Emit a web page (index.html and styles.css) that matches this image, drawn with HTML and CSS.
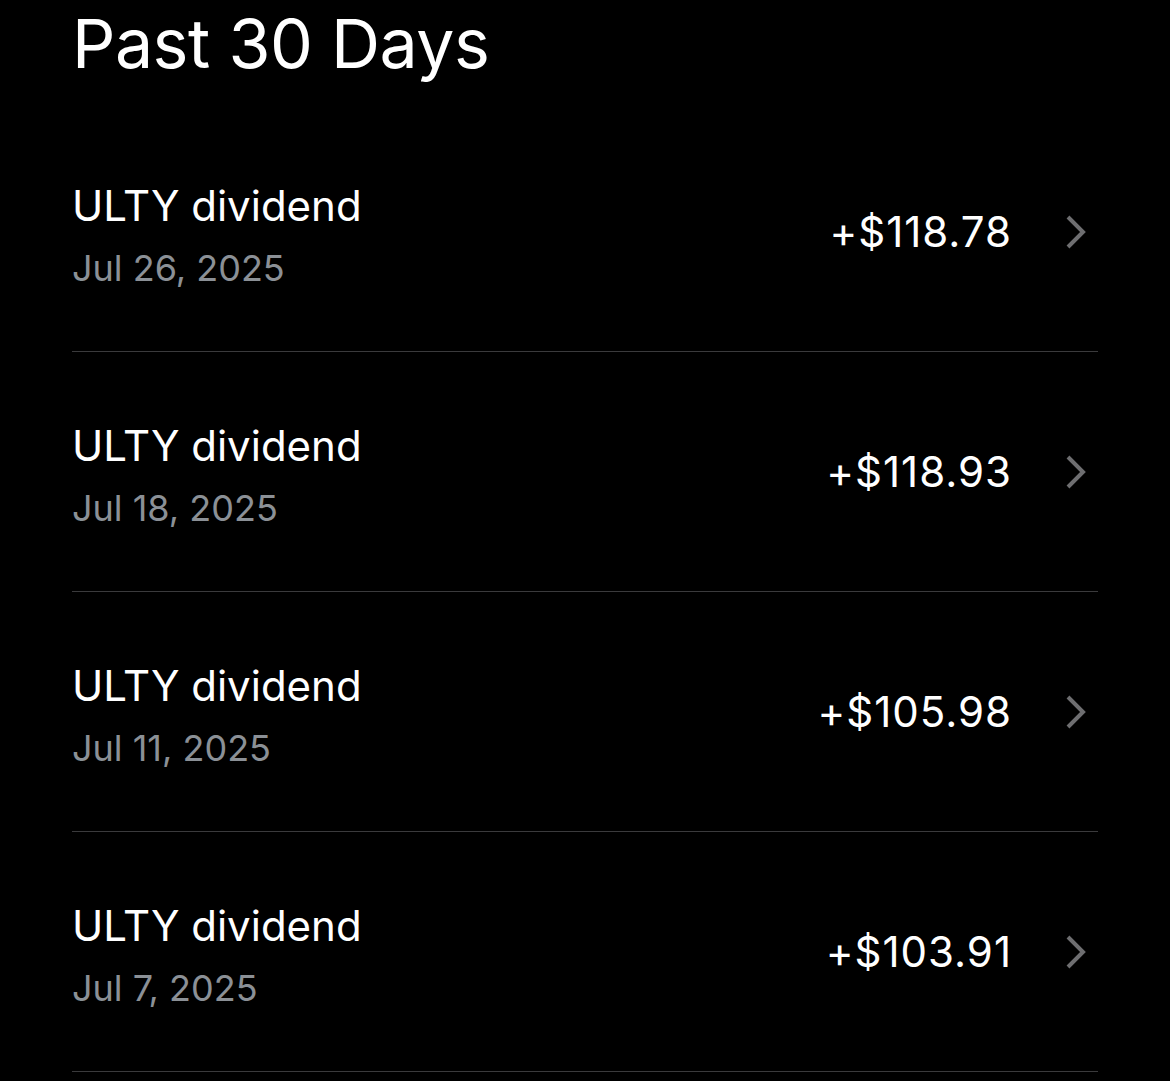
FILE: index.html
```html
<!DOCTYPE html>
<html lang="en">
<head>
    <meta charset="UTF-8">
    <meta name="viewport" content="width=device-width, initial-scale=1.0">
    <title>Past 30 Days</title>
    <link rel="stylesheet" href="styles.css">
</head>
<body>
    <div class="page">
        <h1 class="section-title">Past 30 Days</h1>

        <ul class="history">
            <li class="history-row">
                <div class="info">
                    <div class="name">ULTY dividend</div>
                    <div class="date">Jul 26, 2025</div>
                </div>
                <div class="amount">+$118.78</div>
                <svg class="chevron" viewBox="0 0 24 36"><path d="M4 3 L19 18 L4 33" /></svg>
            </li>
            <li class="history-row">
                <div class="info">
                    <div class="name">ULTY dividend</div>
                    <div class="date">Jul 18, 2025</div>
                </div>
                <div class="amount">+$118.93</div>
                <svg class="chevron" viewBox="0 0 24 36"><path d="M4 3 L19 18 L4 33" /></svg>
            </li>
            <li class="history-row">
                <div class="info">
                    <div class="name">ULTY dividend</div>
                    <div class="date">Jul 11, 2025</div>
                </div>
                <div class="amount">+$105.98</div>
                <svg class="chevron" viewBox="0 0 24 36"><path d="M4 3 L19 18 L4 33" /></svg>
            </li>
            <li class="history-row">
                <div class="info">
                    <div class="name">ULTY dividend</div>
                    <div class="date">Jul 7, 2025</div>
                </div>
                <div class="amount">+$103.91</div>
                <svg class="chevron" viewBox="0 0 24 36"><path d="M4 3 L19 18 L4 33" /></svg>
            </li>
        </ul>
    </div>
</body>
</html>
```

FILE: styles.css
```css
html, body {
    margin: 0;
    background-color: #000;
}
body {
    color: #fff;
    font-family: 'Inter', 'Liberation Sans', sans-serif;
}
.page {
    padding: 0 72px;
}
.section-title {
    font-size: 68px;
    font-weight: 400;
    line-height: 1;
    margin: 0;
    padding-top: 9px;
    height: 103px;
    letter-spacing: -0.5px;
}
.history {
    list-style: none;
    margin: 0;
    padding: 0;
}
.history-row {
    display: flex;
    align-items: center;
    height: 239px;
    border-bottom: 1px solid #3a3a3c;
}
.info {
    flex: 1;
    display: flex;
    flex-direction: column;
    gap: 18px;
    padding-top: 6px;
}
.name {
    font-size: 42px;
    line-height: 48px;
}
.date {
    font-size: 36px;
    line-height: 40px;
    color: #8b9096;
}
.amount {
    font-size: 42px;
    letter-spacing: 1px;
    margin-right: 52px;
}
.chevron {
    width: 24px;
    height: 36px;
    margin-right: 10px;
    fill: none;
    stroke: #6e6e70;
    stroke-width: 4;
}
```
